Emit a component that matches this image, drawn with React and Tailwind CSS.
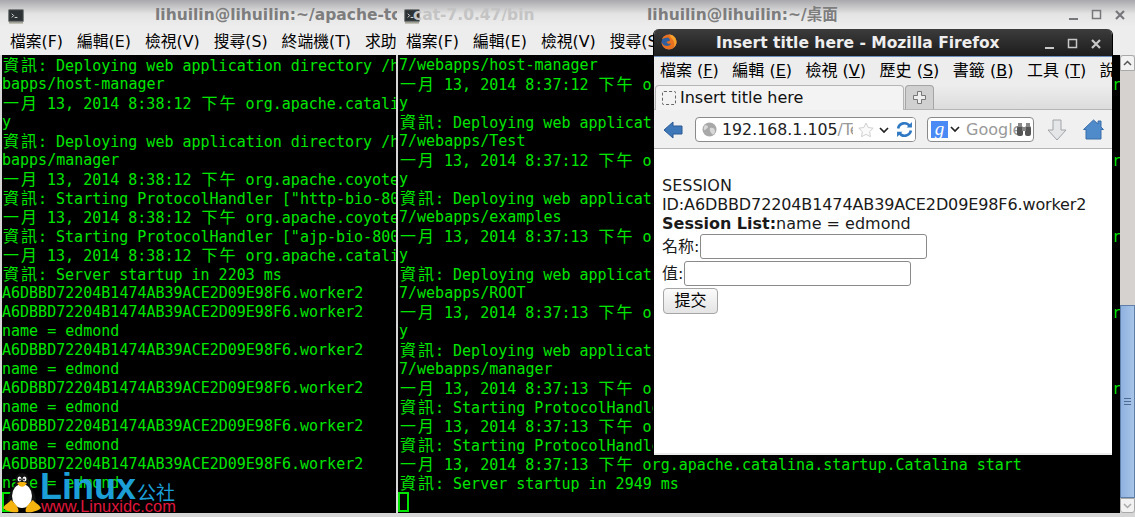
import React from 'react';

const mono = { fontFamily: '"DejaVu Sans Mono", "Noto Sans CJK TC", monospace' };
const sans = { fontFamily: '"DejaVu Sans", "Noto Sans CJK TC", sans-serif' };

const leftLines = [
  '資訊: Deploying web application directory /home/lihuilin/apache-tomcat-7.0.47/we',
  'bapps/host-manager',
  '一月 13, 2014 8:38:12 下午 org.apache.catalina.startup.HostConfig deployDirector',
  'y',
  '資訊: Deploying web application directory /home/lihuilin/apache-tomcat-7.0.47/we',
  'bapps/manager',
  '一月 13, 2014 8:38:12 下午 org.apache.coyote.AbstractProtocol start',
  '資訊: Starting ProtocolHandler ["http-bio-8081"]',
  '一月 13, 2014 8:38:12 下午 org.apache.coyote.AbstractProtocol start',
  '資訊: Starting ProtocolHandler ["ajp-bio-8009"]',
  '一月 13, 2014 8:38:12 下午 org.apache.catalina.startup.Catalina start',
  '資訊: Server startup in 2203 ms',
  'A6DBBD72204B1474AB39ACE2D09E98F6.worker2',
  'A6DBBD72204B1474AB39ACE2D09E98F6.worker2',
  'name = edmond',
  'A6DBBD72204B1474AB39ACE2D09E98F6.worker2',
  'name = edmond',
  'A6DBBD72204B1474AB39ACE2D09E98F6.worker2',
  'name = edmond',
  'A6DBBD72204B1474AB39ACE2D09E98F6.worker2',
  'name = edmond',
  'A6DBBD72204B1474AB39ACE2D09E98F6.worker2',
  'name = edmond',
];

const deployLine = '資訊: Deploying web application directory /home/lihuilin/apache-tomcat-7.0.4';
const configLine = (t) => `一月 13, 2014 ${t} 下午 org.apache.catalina.startup.HostConfig deployDirector`;

const rightLines = [
  '7/webapps/host-manager',
  configLine('8:37:12'),
  'y',
  deployLine,
  '7/webapps/Test',
  configLine('8:37:12'),
  'y',
  deployLine,
  '7/webapps/examples',
  configLine('8:37:13'),
  'y',
  deployLine,
  '7/webapps/ROOT',
  configLine('8:37:13'),
  'y',
  deployLine,
  '7/webapps/manager',
  configLine('8:37:13'),
  '資訊: Starting ProtocolHandler ["http-bio-8080"]',
  '一月 13, 2014 8:37:13 下午 org.apache.coyote.AbstractProtocol start',
  '資訊: Starting ProtocolHandler ["ajp-bio-8009"]',
  '一月 13, 2014 8:37:13 下午 org.apache.catalina.startup.Catalina start',
  '資訊: Server startup in 2949 ms',
];

// terminal cells: CJK glyphs take two columns
const TermLine = ({ text }) => {
  const parts = text.split(/([\u3000-\u9fff\uff00-\uffef])/);
  return (
    <div className="h-[19px] leading-[19px] whitespace-pre">
      {parts.map((part, i) =>
        i % 2 === 1 ? (
          <span key={i} className="inline-block w-[18px] text-center text-[16px]">{part}</span>
        ) : (
          <span key={i}>{part}</span>
        )
      )}
    </div>
  );
};

const TermIcon = () => (
  <svg width="16" height="15" viewBox="0 0 17 16">
    <rect x="0.5" y="0.5" width="16" height="13" rx="1" fill="#3a3f40" stroke="#7c7f7f" />
    <rect x="2" y="2" width="13" height="10" fill="#2c3133" />
    <path d="M4 5l2 2-2 2" fill="none" stroke="#e8e8e8" strokeWidth="1" />
    <path d="M7 9h3" stroke="#e8e8e8" strokeWidth="1" />
    <rect x="1" y="14" width="15" height="1.5" fill="#9a9a8a" />
  </svg>
);

const WindowButtons = ({ color }) => (
  <svg width="60" height="12" viewBox="0 0 60 12" fill="none" stroke={color}>
    <path d="M2 10h9" strokeWidth="2" />
    <rect x="25.5" y="1.5" width="8" height="8" strokeWidth="1.5" />
    <path d="M49 2l8 8M57 2l-8 8" strokeWidth="2.2" />
  </svg>
);

const MenuBar = ({ items, className }) => (
  <div className={`h-[27px] flex items-center gap-[14px] text-[15.800px] text-black bg-[#ededed] whitespace-nowrap overflow-hidden ${className}`} style={sans}>
    {items.map((item) => (
      <span key={item}>{item}</span>
    ))}
  </div>
);

const termMenu = ['檔案(F)', '編輯(E)', '檢視(V)', '搜尋(S)', '終端機(T)', '求助(H)'];

const FirefoxLogo = () => (
  <svg width="16" height="16" viewBox="0 0 16 16">
    <circle cx="8" cy="8" r="7.5" fill="#2f5f9f" />
    <path d="M1 5C2 2 5 .5 8 .5c4 0 7.5 3.5 7.5 7.5 0 4.2-3.4 7.5-7.5 7.5C4 15.500.5 12 .5 8c1 1.500 1 2.500 3 3.500 3 1.200 6 0 6.500-2-2 .8-4 0-4.500-1.500 1-1 2.500-.5 3.500-1.500C9 5 8 4 7 3.500 5 4 3 4 1 5z" fill="#e8701f" />
    <path d="M8 .5c4 0 7.500 3.500 7.500 7.500 0 2-1 4-2.500 5.200C14 10 13 6 10 4 9.500 2.500 9 1.500 8 .5z" fill="#f5a12c" />
  </svg>
);

const Tux = () => (
  <svg width="38" height="40" viewBox="0 0 38 40">
    <path d="M19 0c-5 0-6.500 4-6.500 8 0 4-2.500 6-4.500 10C6 22 4 26 6 32h26c2-6 0-10-2-14-2-4-4.500-6-4.500-10 0-4-1.500-8-6.500-8z" fill="#111" />
    <ellipse cx="19" cy="23" rx="10" ry="12" fill="#fff" />
    <ellipse cx="16.500" cy="6" rx="2" ry="2.500" fill="#fff" />
    <ellipse cx="21.500" cy="6" rx="2" ry="2.500" fill="#fff" />
    <circle cx="17" cy="6.500" r="0.900" fill="#111" />
    <circle cx="21" cy="6.500" r="0.900" fill="#111" />
    <path d="M14 10c2-1.500 8-1.500 10 0l-2.500 3c-2 1-3 1-5 0z" fill="#f5b40f" />
    <path d="M8 27c-2 3-6 4-8 8 3 3 10 5 15 4 2-3-3-9-7-12z" fill="#f5b40f" />
    <path d="M30 27c2 3 6 4 8 8-3 3-10 5-15 4-2-3 3-9 7-12z" fill="#f5b40f" />
  </svg>
);

const App = () => {
  return (
    <div className="relative w-[1135px] h-[517px] overflow-hidden bg-[#d6d6d6]">
      {/* left terminal */}
      <div className="absolute left-0 top-0 w-[398px] h-[517px] flex flex-col">
        <div className="h-[28px] shrink-0 relative bg-gradient-to-b from-[#a9a9ad] via-[#e4e4e4] to-[#eeeeee] pl-[8px] pt-[9px]" style={sans}>
          <TermIcon />
          <div className="absolute left-[155px] top-[4px] font-bold text-[15.500px] text-[#7d7d7d] whitespace-nowrap">lihuilin@lihuilin:~/apache-to</div>
        </div>
        <MenuBar items={termMenu} className="pl-[10px]" />
        <div className="flex-1 mx-[2px] mb-[4px] pt-px bg-black text-[#00e600] text-[15px] overflow-hidden" style={mono}>
          {leftLines.map((line, i) => (
            <TermLine key={i} text={line} />
          ))}
          <div className="w-[11px] h-[20px] -mt-px border-2 border-[#00e600]" />
        </div>
      </div>

      {/* right terminal */}
      <div className="absolute left-[397px] top-0 w-[738px] h-[517px] flex flex-col">
        <div className="h-[28px] shrink-0 relative bg-gradient-to-b from-[#a9a9ad] via-[#e4e4e4] to-[#eeeeee] pl-[7px] pt-[9px]" style={sans}>
          <TermIcon />
          <div className="absolute left-[16px] top-[4px] font-bold text-[15.500px] text-[#c4c4c4] whitespace-nowrap">cat-7.0.47/bin</div>
          <div className="absolute left-[250px] top-[4px] font-bold text-[15.500px] text-[#7d7d7d] whitespace-nowrap">lihuilin@lihuilin:~/桌面</div>
          <div className="absolute left-[670px] top-[9px]">
            <WindowButtons color="#77777b" />
          </div>
        </div>
        <MenuBar items={termMenu} className="pl-[9px]" />
        <div className="flex-1 flex mb-[4px] ml-[1px] min-h-0">
          <div className="flex-1 pl-px pt-px bg-black text-[#00e600] text-[15px] overflow-hidden min-w-0" style={mono}>
            {rightLines.map((line, i) => (
              <TermLine key={i} text={line} />
            ))}
            <div className="w-[11px] h-[20px] -mt-px -ml-px border-2 border-[#00e600]" />
          </div>
          <div className="w-[15px] shrink-0 flex flex-col bg-[#d5d2cf]">
            <div className="h-[16px] shrink-0 bg-[#f2f2f2] border border-[#a9a9a9] rounded-t-[3px] flex items-center justify-center">
              <svg width="9" height="6" viewBox="0 0 9 6" fill="none" stroke="#555"><path d="M1 5l3.500-3.500L8 5" strokeWidth="1.500" /></svg>
            </div>
            <div className="flex-1" />
            <div className="h-[193px] shrink-0 bg-gradient-to-r from-[#8fb1df] to-[#a8c5e8] border border-[#5f7ea8] flex flex-col items-center justify-center gap-[2px]">
              <div className="w-[7px] h-px bg-[#4d6a92]" />
              <div className="w-[7px] h-px bg-[#4d6a92]" />
              <div className="w-[7px] h-px bg-[#4d6a92]" />
            </div>
            <div className="h-[15px] shrink-0 bg-[#f2f2f2] border border-[#a9a9a9] rounded-b-[3px] flex items-center justify-center">
              <svg width="9" height="6" viewBox="0 0 9 6" fill="none" stroke="#aaa"><path d="M1 1l3.500 3.500L8 1" strokeWidth="1.500" /></svg>
            </div>
          </div>
        </div>
      </div>

      {/* firefox */}
      <div className="absolute left-[653px] top-[29px] w-[460px] h-[426px] flex flex-col bg-[#ededed] border-x border-black rounded-t-[6px] overflow-hidden" style={sans}>
        <div className="h-[28px] shrink-0 relative bg-gradient-to-b from-[#3c3c3c] to-[#1d1d1d] border-b border-[#6d8fbd]">
          <div className="absolute left-[7px] top-[5px]"><FirefoxLogo /></div>
          <div className="absolute left-[62px] top-[3px] font-bold text-[15.500px] text-[#eeeeee] whitespace-nowrap">Insert title here - Mozilla Firefox</div>
          <div className="absolute left-[389px] top-[9px]"><WindowButtons color="#c8c8c8" /></div>
        </div>
        <div className="h-[28px] shrink-0 flex items-center gap-[13.500px] pl-[6px] text-[16px] text-black whitespace-nowrap overflow-hidden bg-[#ededed]">
          <span>檔案 (<u>F</u>)</span>
          <span>編輯 (<u>E</u>)</span>
          <span>檢視 (<u>V</u>)</span>
          <span>歷史 (<u>S</u>)</span>
          <span>書籤 (<u>B</u>)</span>
          <span>工具 (<u>T</u>)</span>
          <span>說明 (<u>H</u>)</span>
        </div>
        <div className="h-[25px] shrink-0 flex items-end pl-px gap-px border-b border-[#b5b5b5] bg-gradient-to-b from-[#ededed] to-[#dcdcdc]">
          <div className="w-[249px] h-[25px] -mb-px flex items-center gap-[4px] pl-[6px] bg-[#f3f3f3] border border-b-0 border-[#b5b5b5] rounded-t-[4px] text-[16px] text-[#111]">
            <div className="w-[14px] h-[14px] border border-dashed border-[#666] rounded-[2px]" />
            <span>Insert title here</span>
          </div>
          <div className="w-[29px] h-[24px] flex items-center justify-center bg-[#d0d0d0] border border-b-0 border-[#a5a5a5] rounded-t-[4px]">
            <svg width="13" height="13" viewBox="0 0 13 13"><path d="M4.500.5h4v4h4v4h-4v4h-4v-4h-4v-4h4z" fill="#eeeeee" stroke="#777" /></svg>
          </div>
        </div>
        <div className="h-[39px] shrink-0 relative flex items-center bg-[#f0f0f0] border-b border-[#b5b5b5]">
          <svg className="absolute left-[9px] top-[10px]" width="20" height="20" viewBox="0 0 20 20"><path d="M1 10l9-8v4h9v8h-9v4z" fill="#3f78b8" stroke="#2a5a96" /></svg>
          <div className="absolute left-[41px] top-[7px] w-[221px] h-[25px] flex items-center bg-white border border-[#8a8a8a] rounded-[4px] pl-[6px] overflow-hidden">
            <svg width="15" height="15" viewBox="0 0 15 15" className="shrink-0"><circle cx="7.500" cy="7.500" r="7" fill="#a8a8a8" /><path d="M3 3c2 0 3 1 3 2S4 7 3 8 1 6 3 3zM8 6c2-1 5 0 5 3s-2 4-3 3-3-4-2-6z" fill="#d8d8d8" /></svg>
            <span className="ml-[5px] text-[15.800px] text-[#222] whitespace-nowrap">192.168.1.105<span className="text-[#999]">/Te</span></span>
            <div className="absolute left-[157px] top-0 w-[64px] h-full bg-white" />
            <svg width="16" height="16" viewBox="0 0 16 16" className="absolute left-[162px] top-[4px]"><path d="M8 1l2.200 4.500 5 .7-3.600 3.500.9 5L8 12.400 3.500 14.700l.9-5L.8 6.200l5-.7z" fill="#fafafa" stroke="#cfcfcf" /></svg>
            <svg width="10" height="7" viewBox="0 0 10 7" className="absolute left-[183px] top-[9px]"><path d="M1 1l4 4 4-4" fill="none" stroke="#222" strokeWidth="1.700" /></svg>
            <svg width="17" height="17" viewBox="0 0 16 16" className="absolute left-[200px] top-[3px]" fill="none" strokeWidth="2.500"><path d="M2 7a6 6 0 0 1 11-2" stroke="#2f78c4" /><path d="M14 9a6 6 0 0 1-11 2" stroke="#2f78c4" /><path d="M10 6h5V1z" fill="#2f78c4" strokeWidth="0" /><path d="M6 10H1v5z" fill="#2f78c4" strokeWidth="0" /></svg>
          </div>
          <div className="absolute left-[273px] top-[7px] w-[107px] h-[25px] flex items-center bg-white border border-[#8a8a8a] rounded-[4px] pl-[3px] overflow-hidden">
            <div className="w-[17px] h-[17px] shrink-0 bg-[#4a8af4] text-white text-[19px] leading-[15px] text-center italic" style={{ fontFamily: '"Liberation Serif", serif' }}>g</div>
            <svg width="10" height="7" viewBox="0 0 10 7" className="ml-[2px] shrink-0"><path d="M1 1l4 4 4-4" fill="none" stroke="#222" strokeWidth="1.700" /></svg>
            <span className="ml-[6px] text-[16px] text-[#999]">Google</span>
            <svg width="16" height="14" viewBox="0 0 16 14" className="absolute right-[1px] top-[5px]"><rect x="1" y="3" width="6" height="10" rx="2" fill="#555" /><rect x="9" y="3" width="6" height="10" rx="2" fill="#555" /><rect x="6" y="4" width="4" height="4" fill="#888" /><rect x="2" y="0" width="4" height="4" fill="#888" /><rect x="10" y="0" width="4" height="4" fill="#888" /></svg>
          </div>
          <svg className="absolute left-[393px] top-[8px]" width="20" height="24" viewBox="0 0 20 24"><path d="M6 2h8v10h5l-9 10-9-10h5z" fill="#e4e6e8" stroke="#a0a4a8" /></svg>
          <svg className="absolute left-[429px] top-[9px]" width="21" height="21" viewBox="0 0 21 21"><path d="M10.500 1L15 5V2h3v6l2.500 2.500H18V20H3v-9.500H.500z" fill="#4f8aca" stroke="#3a6ea8" /></svg>
        </div>
        <div className="flex-1 bg-white pl-[8px] pt-[27px] text-[16px] leading-[19px] text-[#1a1a1a]">
          <div>SESSION</div>
          <div className="tracking-[-0.120px]">ID:A6DBBD72204B1474AB39ACE2D09E98F6.worker2</div>
          <div><b>Session List:</b>name = edmond</div>
          <div className="flex items-center h-[27px]">
            <span>名称:</span>
            <input className="w-[227px] h-[25px] ml-px bg-white border border-[#8a8a8a] rounded-[3px]" />
          </div>
          <div className="flex items-center h-[27px]">
            <span>值:</span>
            <input className="w-[227px] h-[25px] ml-px bg-white border border-[#8a8a8a] rounded-[3px]" />
          </div>
          <button className="block w-[55px] h-[26px] mt-px ml-px bg-gradient-to-b from-[#fbfbfb] to-[#e4e4e4] border border-[#a5a5a5] rounded-[4px] text-[16px] leading-[20px] text-black">提交</button>
        </div>
        <div className="h-[2px] shrink-0 bg-[#ededed]" />
      </div>

      {/* watermark */}
      <div className="absolute left-[3px] top-[473px]">
        <Tux />
      </div>
      <div className="absolute left-[40px] top-[469px] h-[36px] flex items-end">
        <span className="font-bold text-[#1b9fd6] text-[36px] leading-[36px]" style={{ fontFamily: '"Liberation Sans", sans-serif' }}>Linux</span>
        <span className="text-[#1b9fd6] text-[19px] leading-[20px] ml-[1px] mb-[3px]" style={{ fontFamily: '"Noto Sans CJK SC", sans-serif' }}>公社</span>
      </div>
      <div className="absolute left-[41px] top-[499px] text-[#e0173d] text-[16.400px] leading-[15px] whitespace-nowrap" style={{ fontFamily: '"Liberation Sans", sans-serif' }}>www.Linuxidc.com</div>
    </div>
  );
};

export default App;
